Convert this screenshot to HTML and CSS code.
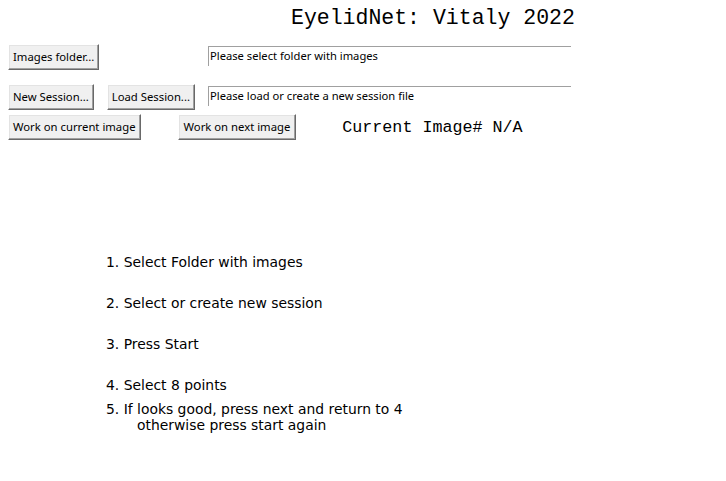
FILE: index.html
```html
<!DOCTYPE html>
<html>
<head>
<meta charset="utf-8">
<link rel="stylesheet" href="styles.css">
</head>
<body>
<div class="app">
  <div class="title">EyelidNet: Vitaly 2022</div>
  <div class="row row1">
    <div class="btncol"><button class="btn">Images folder...</button></div>
    <div class="entry">Please select folder with images</div>
  </div>
  <div class="row row2">
    <div class="btncol">
      <button class="btn">New Session...</button>
      <button class="btn btn-load">Load Session...</button>
    </div>
    <div class="entry">Please load or create a new session file</div>
  </div>
  <div class="row row3">
    <button class="btn">Work on current image</button>
    <button class="btn btn-next">Work on next image</button>
    <div class="current">Current Image# N/A</div>
  </div>
  <div class="steps">
    <p class="step">1. Select Folder with images</p>
    <p class="step">2. Select or create new session</p>
    <p class="step">3. Press Start</p>
    <p class="step">4. Select 8 points</p>
    <p class="step step5">5. If looks good, press next and return to 4<br><span class="indent">otherwise press start again</span></p>
  </div>
</div>
</body>
</html>
```

FILE: styles.css
```css
html, body {
  margin: 0;
  padding: 0;
  background: #ffffff;
}
.app {
  width: 726px;
  height: 481px;
  display: flex;
  flex-direction: column;
  font-family: "Noto Sans", "DejaVu Sans", sans-serif;
}
.title {
  font-family: "Liberation Mono", monospace;
  font-size: 21.5px;
  line-height: 24px;
  color: #000;
  padding-left: 291px;
  margin-top: 6px;
  height: 24px;
}
.row {
  display: flex;
  align-items: flex-start;
  padding-left: 8px;
}
.row1 { margin-top: 14px; }
.row2 { margin-top: 14px; }
.row3 { margin-top: 4px; }
.btncol {
  width: 200px;
  display: flex;
  gap: 13px;
}
.btn {
  box-sizing: border-box;
  height: 26px;
  padding: 0 4px 1px;
  margin: 0;
  font-family: "Noto Sans", "DejaVu Sans", sans-serif;
  font-size: 11.3px;
  color: #000;
  background: #f0f0f0;
  border: 1px solid;
  border-color: #ffffff #696969 #696969 #ffffff;
  box-shadow: inset -1px -1px 0 #a0a0a0, inset 1px 1px 0 #e3e3e3;
  white-space: nowrap;
}
.btn-next { margin-left: 37px; padding: 0 5px 1px; }
.entry {
  box-sizing: border-box;
  margin-top: 2px;
  width: 363px;
  height: 20px;
  border-top: 1px solid #a0a0a0;
  border-left: 1px solid #a0a0a0;
  padding: 0 0 0 1px;
  font-size: 11.2px;
  line-height: 17px;
  color: #000;
}
.current {
  font-family: "Liberation Mono", monospace;
  font-size: 16.7px;
  line-height: 24px;
  margin-left: 46px;
  margin-top: 2px;
}
.steps {
  margin-top: 114px;
  padding-left: 106px;
  font-family: "DejaVu Sans", sans-serif;
  font-size: 13.9px;
  color: #000;
}
.step {
  margin: 0 0 24px 0;
  line-height: 17px;
}
.step5 {
  margin-top: -17px;
  line-height: 16px;
}
.indent {
  padding-left: 31px;
}
```
